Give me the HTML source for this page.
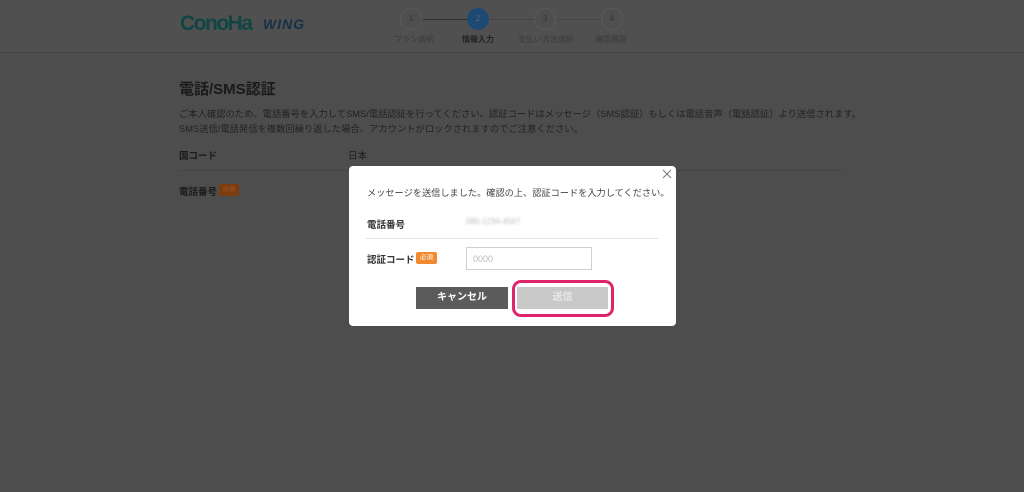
<!DOCTYPE html>
<html><head><meta charset="utf-8"><style>
*{margin:0;padding:0;box-sizing:border-box}
body{width:1024px;height:492px;background:#4d4d4d;font-family:"Liberation Sans","Noto Sans CJK JP",sans-serif;position:relative;overflow:hidden;color:#1c1c1c}
.hdr{position:absolute;left:0;top:0;width:1024px;height:53px;background:#505050;border-bottom:1px solid #444}
.abs{position:absolute;white-space:nowrap}
.circ{position:absolute;width:22px;height:22px;border-radius:50%;border:1px solid #5a5a5a;background:#4f4f4f;font-size:8px;color:#333;text-align:center;line-height:20px}
.line{position:absolute;height:1px;background:#333;top:19px}
.lbl{position:absolute;top:34px;font-size:8px;color:#3a3a3a;white-space:nowrap}
.modal{position:absolute;left:349px;top:166px;width:327px;height:160px;background:#fff;border-radius:4px}
</style></head><body>
<div class="hdr">
 <div class="abs" style="left:180px;top:12px;font-size:21px;font-weight:bold;color:#0f4644;letter-spacing:-1.5px">ConoHa</div>
 <div class="abs" style="left:263px;top:16px;font-size:14px;font-weight:bold;font-style:italic;color:#173048;letter-spacing:1px">WING</div>
 <div class="circ" style="left:400px;top:8px">1</div>
 <div class="line" style="left:423px;width:44px;background:#2e2e2e"></div>
 <div class="circ" style="left:467px;top:8px;background:#1c4a72;border-color:#1c4a72;color:#5a6a7a">2</div>
 <div class="line" style="left:490px;width:44px;background:#454545"></div>
 <div class="circ" style="left:534px;top:8px">3</div>
 <div class="line" style="left:557px;width:44px;background:#454545"></div>
 <div class="circ" style="left:601px;top:8px">4</div>
 <div class="lbl" style="left:394px">プラン選択</div>
 <div class="lbl" style="left:462px;color:#222;font-weight:bold">情報入力</div>
 <div class="lbl" style="left:518px">支払い方法選択</div>
 <div class="lbl" style="left:595px">確認画面</div>
</div>
<div class="abs" style="left:179px;top:78px;font-size:15px;font-weight:bold;color:#1a1a1a">電話/SMS認証</div>
<div class="abs" style="left:179px;top:106px;font-size:9.3px;color:#222">ご本人確認のため、電話番号を入力してSMS/電話認証を行ってください。認証コードはメッセージ（SMS認証）もしくは電話音声（電話認証）より送信されます。</div>
<div class="abs" style="left:179px;top:121px;font-size:9.3px;color:#222">SMS送信/電話発信を複数回繰り返した場合、アカウントがロックされますのでご注意ください。</div>
<div class="abs" style="left:179px;top:148px;font-size:9.5px;font-weight:bold;color:#1a1a1a">国コード</div>
<div class="abs" style="left:348px;top:148px;font-size:9.5px;color:#1a1a1a">日本</div>
<div class="abs" style="left:179px;top:170px;width:663px;height:1px;background:#444"></div>
<div class="abs" style="left:179px;top:184px;font-size:9.5px;font-weight:bold;color:#1a1a1a">電話番号</div>
<div class="abs" style="left:219px;top:184px;width:20px;height:12px;background:#7a3c10;font-size:6px;color:#a85a20;text-align:center;line-height:12px">必須</div>
<div class="modal">
 <svg class="abs" style="left:313px;top:3px" width="10" height="10" viewBox="0 0 10 10"><path d="M1 1L9 9M9 1L1 9" stroke="#777" stroke-width="1" fill="none"/></svg>
 <div class="abs" style="left:18px;top:19px;font-size:9.2px;color:#444">メッセージを送信しました。確認の上、認証コードを入力してください。</div>
 <div class="abs" style="left:18px;top:51px;font-size:9.5px;font-weight:bold;color:#333">電話番号</div>
 <div class="abs" style="left:117px;top:51px;font-size:8px;color:#bbb;filter:blur(1.2px)">080-1234-4567</div>
 <div class="abs" style="left:17px;top:72px;width:292px;height:1px;background:#e2e2e2"></div>
 <div class="abs" style="left:18px;top:86px;font-size:9.5px;font-weight:bold;color:#333">認証コード</div>
 <div class="abs" style="left:67px;top:86px;width:21px;height:12px;background:#f08a30;border-radius:2px;font-size:6.5px;color:#fff;text-align:center;line-height:12px">必須</div>
 <div class="abs" style="left:117px;top:81px;width:126px;height:23px;border:1px solid #d0d0d0;font-size:9px;color:#bbb;padding:6px 6px">0000</div>
 <div class="abs" style="left:67px;top:121px;width:92px;height:22px;background:#5b5b5b;color:#fff;font-size:10px;font-weight:bold;text-align:center;line-height:22px">キャンセル</div>
 <div class="abs" style="left:163px;top:114px;width:102px;height:37px;border:3px solid #e0246c;border-radius:9px"></div>
 <div class="abs" style="left:168px;top:121px;width:91px;height:22px;background:#c9c9c9;color:#e8e8e8;font-size:10px;font-weight:bold;text-align:center;line-height:22px">送信</div>
</div>
</body></html>
